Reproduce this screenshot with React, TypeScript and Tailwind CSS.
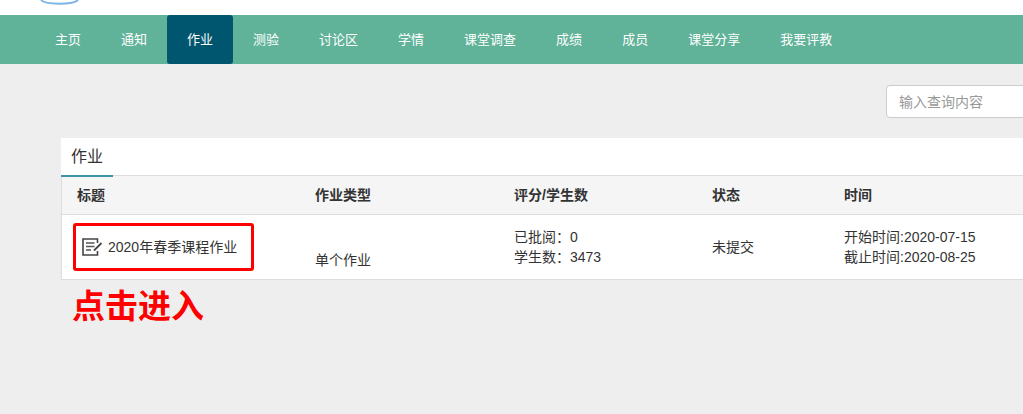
const navItems = ['主页', '通知', '作业', '测验', '讨论区', '学情', '课堂调查', '成绩', '成员', '课堂分享', '我要评教'];

const rowClass = 'grid grid-cols-[237px_199px_198px_132px_1fr]';

function NoteIcon() {
  return (
    <svg width="22" height="18" viewBox="0 0 22 18" fill="none" className="shrink-0">
      <path d="M15.5 5V1H1v16h14.5v-4" stroke="#444" strokeWidth="1.6" />
      <path d="M4 5h8.5M4 8.5h8.5M4 12h5" stroke="#555" strokeWidth="1.4" />
      <path d="M12 12.5l7.5-7.5" stroke="#444" strokeWidth="1.8" />
    </svg>
  );
}

function Nav() {
  return (
    <nav className="flex h-[49px] bg-[#60b298] pl-[35px]">
      {navItems.map((item) => (
        <a
          key={item}
          className={`flex h-full items-center px-5 text-[13px] text-white ${
            item === '作业' ? 'rounded-[3px] bg-[#01566f]' : ''
          }`}
        >
          {item}
        </a>
      ))}
    </nav>
  );
}

export default function App() {
  return (
    <div className="h-[414px] w-[1023px] overflow-hidden bg-[#eeeeee] font-['Liberation_Sans','Noto_Sans_CJK_SC',sans-serif] text-[14px] text-[#333]">
      {/* Header */}
      <header className="h-[15px] overflow-hidden bg-white pl-[40px]">
        <svg width="40" height="15" viewBox="0 0 40 15" fill="none" className="block">
          <path d="M1 0c4 5 32 5 37 0" stroke="#7db5e6" strokeWidth="2" />
        </svg>
      </header>

      <Nav />

      <main className="w-[1100px] pl-[61px]">
        {/* Search */}
        <div className="flex justify-start pl-[825px] pt-[21px]">
          <input
            placeholder="输入查询内容"
            className="h-[33px] w-[200px] rounded-[4px] border border-[#ccc] bg-white px-3 text-[14px] placeholder:text-[#999]"
          />
        </div>

        {/* Card */}
        <section className="relative mt-[20px] bg-white">
          <div className="h-[37px]">
            <span className="inline-block h-[39px] w-[52px] border-b-2 border-[#3a96a5] pl-[10px] pt-[8px] text-[16px] leading-[22px]">
              作业
            </span>
          </div>
          <div className="border-b border-l border-[#ddd]">
            <div className={`${rowClass} h-[40px] items-center border-y border-[#ddd] bg-[#f5f5f5] font-bold`}>
              <div className="pl-[15px]">标题</div>
              <div className="pl-4">作业类型</div>
              <div className="pl-4">评分/学生数</div>
              <div className="pl-4">状态</div>
              <div className="pl-4">时间</div>
            </div>
            <div className={`${rowClass} h-[64px] items-center`}>
              <div className="flex items-center gap-[4px] pl-[20px]">
                <NoteIcon />
                <span>2020年春季课程作业</span>
              </div>
              <div className="self-end pb-[8px] pl-4">单个作业</div>
              <div className="pl-4 leading-[20px]">
                <div>已批阅：0</div>
                <div>学生数：3473</div>
              </div>
              <div className="pl-4">未提交</div>
              <div className="pl-4 leading-[20px]">
                <div>开始时间:2020-07-15</div>
                <div>截止时间:2020-08-25</div>
              </div>
            </div>
          </div>
          {/* Red highlight around the title */}
          <div className="absolute left-[12px] top-[85px] h-[48px] w-[181px] rounded-[3px] border-[3px] border-[#fe0000]" />
        </section>

        <p className="mt-[7px] pl-[11px] text-[33px] font-bold leading-[40px] text-[#fe0000]">点击进入</p>
      </main>
    </div>
  );
}
